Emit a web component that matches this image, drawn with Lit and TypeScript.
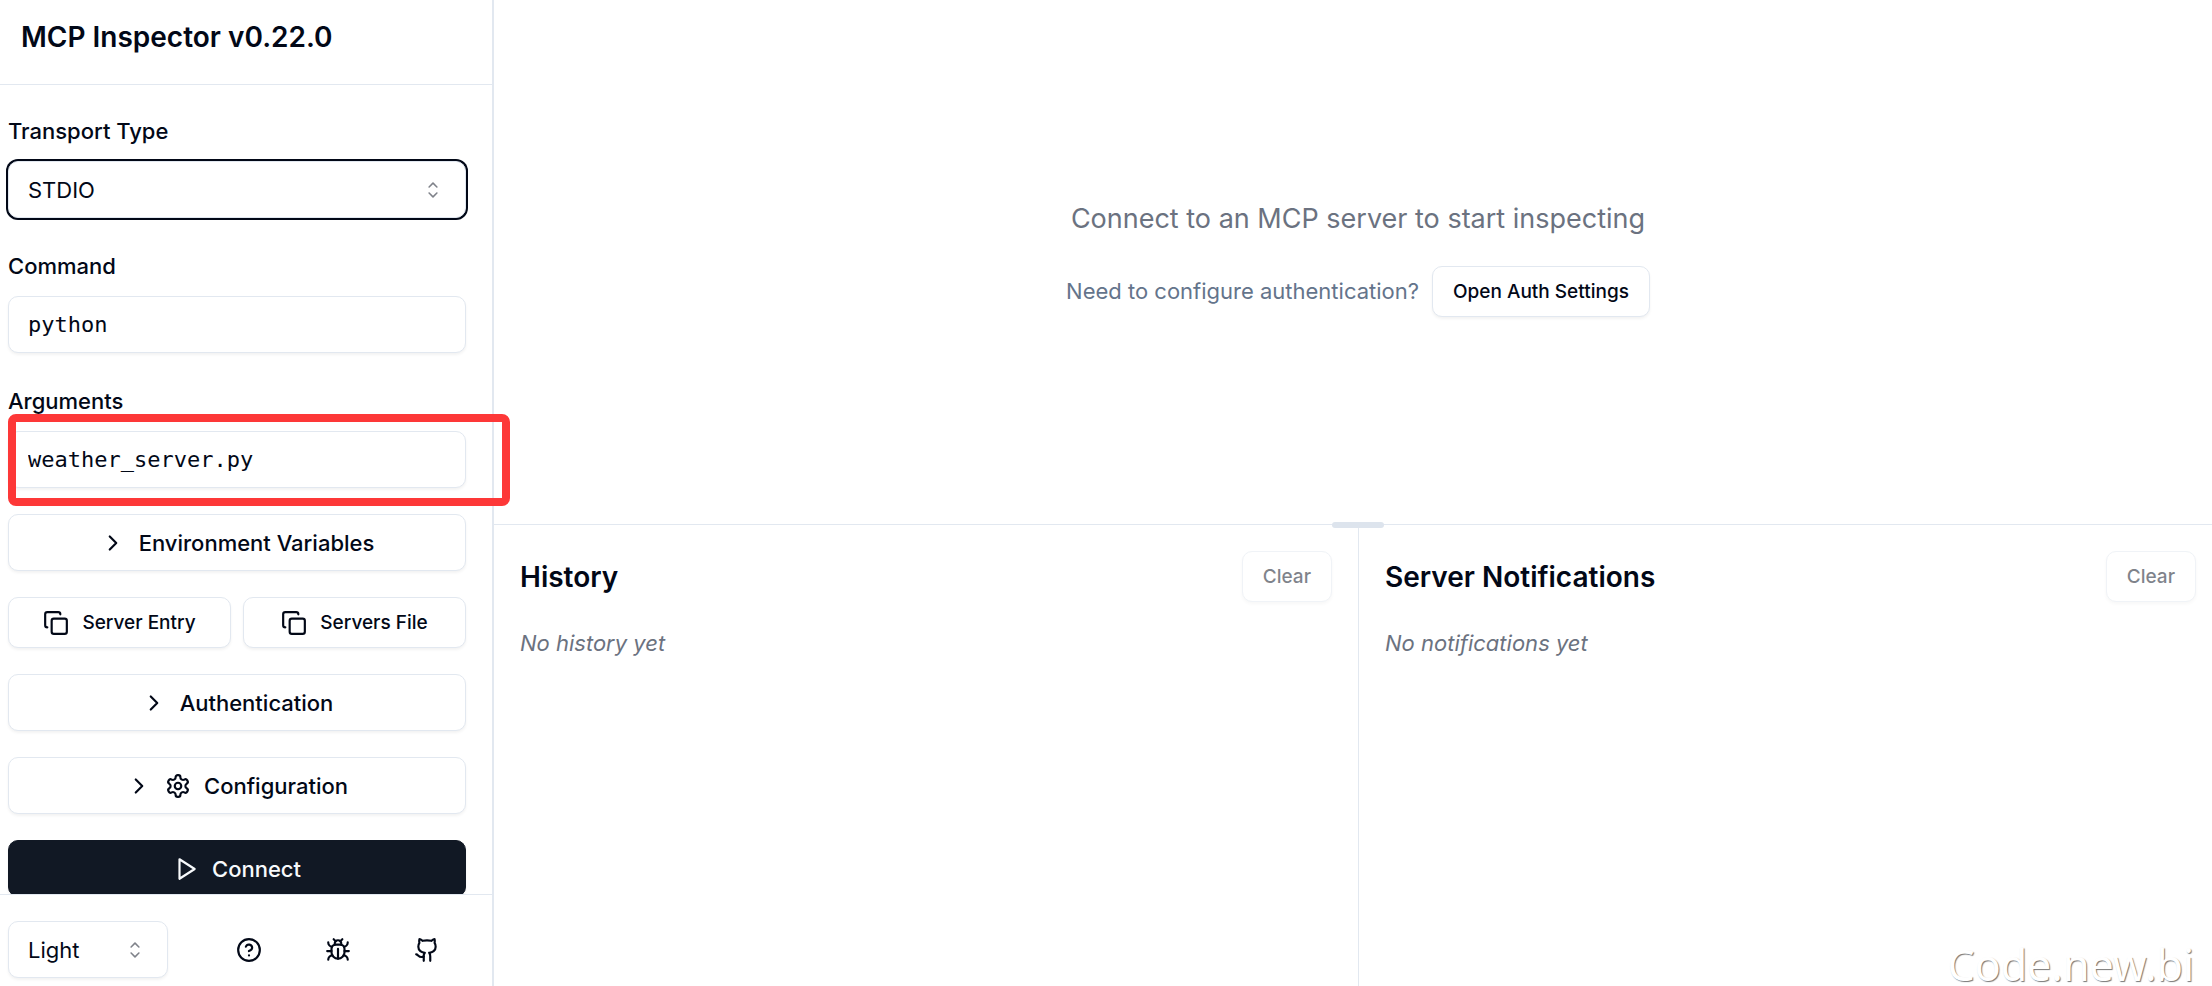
import { LitElement, html, css, svg, type TemplateResult } from "lit";
import { customElement, state } from "lit/decorators.js";

const icon = (body: TemplateResult) => html`
  <svg class="icon" viewBox="0 0 24 24" fill="none" stroke="currentColor" stroke-width="2"
    stroke-linecap="round" stroke-linejoin="round" aria-hidden="true">${body}</svg>`;

const chevronRight = icon(svg`<path d="m9 18 6-6-6-6"/>`);
const copy = icon(svg`
  <rect width="14" height="14" x="8" y="8" rx="2" ry="2"/>
  <path d="M4 16c-1.1 0-2-.9-2-2V4c0-1.1.9-2 2-2h10c1.1 0 2 .9 2 2"/>`);
const gear = icon(svg`
  <path d="M12.22 2h-.44a2 2 0 0 0-2 2v.18a2 2 0 0 1-1 1.73l-.43.25a2 2 0 0 1-2 0l-.15-.08a2 2 0 0 0-2.73.73l-.22.38a2 2 0 0 0 .73 2.73l.15.1a2 2 0 0 1 1 1.72v.51a2 2 0 0 1-1 1.74l-.15.09a2 2 0 0 0-.73 2.73l.22.38a2 2 0 0 0 2.73.73l.15-.08a2 2 0 0 1 2 0l.43.25a2 2 0 0 1 1 1.73V20a2 2 0 0 0 2 2h.44a2 2 0 0 0 2-2v-.18a2 2 0 0 1 1-1.73l.43-.25a2 2 0 0 1 2 0l.15.08a2 2 0 0 0 2.73-.73l.22-.39a2 2 0 0 0-.73-2.73l-.15-.08a2 2 0 0 1-1-1.74v-.5a2 2 0 0 1 1-1.74l.15-.09a2 2 0 0 0 .73-2.73l-.22-.38a2 2 0 0 0-2.73-.73l-.15.08a2 2 0 0 1-2 0l-.43-.25a2 2 0 0 1-1-1.73V4a2 2 0 0 0-2-2z"/>
  <circle cx="12" cy="12" r="3"/>`);
const play = icon(svg`<polygon points="6 3 20 12 6 21 6 3"/>`);
const help = icon(svg`
  <circle cx="12" cy="12" r="10"/>
  <path d="M9.09 9a3 3 0 0 1 5.83 1c0 2-3 3-3 3"/>
  <path d="M12 17h.01"/>`);
const bug = icon(svg`
  <path d="m8 2 1.88 1.88"/>
  <path d="M14.12 3.88 16 2"/>
  <path d="M9 7.13v-1a3.003 3.003 0 1 1 6 0v1"/>
  <path d="M12 20c-3.3 0-6-2.7-6-6v-3a4 4 0 0 1 4-4h4a4 4 0 0 1 4 4v3c0 3.3-2.7 6-6 6"/>
  <path d="M12 20v-9"/>
  <path d="M6.53 9C4.6 8.8 3 7.1 3 5"/>
  <path d="M6 13H2"/>
  <path d="M3 21c0-2.1 1.7-3.9 3.8-4"/>
  <path d="M20.97 5c0 2.1-1.6 3.8-3.5 4"/>
  <path d="M22 13h-4"/>
  <path d="M17.2 17c2.1.1 3.8 1.9 3.8 4"/>`);
const github = icon(svg`
  <path d="M15 22v-4a4.8 4.8 0 0 0-1-3.5c3 0 6-2 6-5.5.08-1.25-.27-2.48-1-3.5.28-1.15.28-2.35 0-3.5 0 0-1 0-3 1.5-2.64-.5-5.36-.5-8 0C6 2 5 2 5 2c-.3 1.15-.3 2.35 0 3.5A5.403 5.403 0 0 0 4 9c0 3.5 3 5.5 6 5.5-.39.49-.68 1.05-.85 1.65-.17.6-.22 1.23-.15 1.85v4"/>
  <path d="M9 18c-4.51 2-5-2-7-2"/>`);
const caretSort = html`
  <svg class="caret" viewBox="0 0 15 15" fill="currentColor" aria-hidden="true">
    <path fill-rule="evenodd" clip-rule="evenodd" d="M4.93179 5.43179C4.75605 5.60753 4.75605 5.89245 4.93179 6.06819C5.10753 6.24392 5.39245 6.24392 5.56819 6.06819L7.49999 4.13638L9.43179 6.06819C9.60753 6.24392 9.89245 6.24392 10.0682 6.06819C10.2439 5.89245 10.2439 5.60753 10.0682 5.43179L7.81819 3.18179C7.73379 3.0974 7.61933 3.04999 7.49999 3.04999C7.38064 3.04999 7.26618 3.0974 7.18179 3.18179L4.93179 5.43179ZM10.0682 9.56819C10.2439 9.39245 10.2439 9.10753 10.0682 8.93179C9.89245 8.75606 9.60753 8.75606 9.43179 8.93179L7.49999 10.8636L5.56819 8.93179C5.39245 8.75606 5.10753 8.75606 4.93179 8.93179C4.75605 9.10753 4.75605 9.39245 4.93179 9.56819L7.18179 11.8182C7.35753 11.9939 7.64245 11.9939 7.81819 11.8182L10.0682 9.56819Z"/>
  </svg>`;

const shared = css`
  :host {
    --ink: #020817;
    --muted: #64748b;
    --line: #e2e8f0;
    box-sizing: border-box;
  }
  *, *::before, *::after { box-sizing: border-box; }
  h1, h2, p { margin: 0; }
  button, input, select {
    margin: 0;
    font: inherit;
    color: inherit;
    background: #fff;
    border: 1px solid var(--line);
    border-radius: 10px;
    box-shadow: 0 2px 3px rgb(0 0 0 / 5%);
  }
  .btn {
    display: flex;
    align-items: center;
    justify-content: center;
    gap: 13px;
    height: 57px;
    padding: 0 20px;
    font-size: 22px;
    font-weight: 500;
    white-space: nowrap;
    cursor: pointer;
  }
  .btn.small { height: 51px; font-size: 19px; }
  .btn:disabled { opacity: 0.5; color: var(--ink); cursor: default; }
  .icon { width: 26px; height: 26px; flex: none; }
`;

@customElement("inspector-sidebar")
export class InspectorSidebar extends LitElement {
  static styles = [shared, css`
    :host {
      display: flex;
      flex-direction: column;
      width: 494px;
      flex: none;
      min-height: 0;
      border-right: 2px solid var(--line);
    }
    .head {
      flex: none;
      height: 85px;
      padding: 16px 21px 0;
      border-bottom: 1px solid var(--line);
    }
    h1 { font-size: 28px; line-height: 42px; font-weight: 600; }
    .body {
      flex: 1;
      min-height: 0;
      overflow-x: visible;
      overflow-y: clip;
      display: flex;
      flex-direction: column;
      gap: 26px;
      padding: 24px 26px 0 8px;
    }
    .body > * { flex: none; }
    .field { display: flex; flex-direction: column; gap: 8px; }
    label { font-size: 22px; line-height: 44px; font-weight: 500; }
    .pick { display: grid; align-items: center; }
    .pick > * { grid-area: 1 / 1; }
    select, .text {
      width: 100%;
      height: 57px;
      padding: 0 19px;
      font-size: 22px;
      outline: none;
    }
    select { appearance: none; }
    select.active {
      border-color: var(--line);
      box-shadow: 0 0 0 2px var(--ink);
    }
    .text { font-family: "DejaVu Sans Mono", monospace; }
    .caret {
      width: 26px;
      height: 26px;
      margin-right: 20px;
      justify-self: end;
      opacity: 0.5;
      pointer-events: none;
    }
    .marked { position: relative; }
    .marker {
      position: absolute;
      inset: -17px -44px -18px 0;
      border: 8px solid #fd3838;
      border-radius: 8px;
      pointer-events: none;
    }
    .pair { display: grid; grid-template-columns: 1fr 1fr; gap: 12px; }
    .primary { background: #111824; border-color: #111824; color: #f8fafc; }
    .foot {
      flex: none;
      display: flex;
      align-items: center;
      justify-content: space-between;
      padding: 26px 36px 8px 8px;
      border-top: 1px solid var(--line);
    }
    .theme { width: 160px; }
    .links { display: flex; gap: 31px; }
    .links a {
      display: grid;
      place-items: center;
      width: 58px;
      height: 57px;
      color: var(--ink);
    }
  `];

  @state() private command = "python";
  @state() private args = "weather_server.py";

  render() {
    return html`
      <header class="head"><h1>MCP Inspector v0.22.0</h1></header>
      <div class="body">
        <div class="field">
          <label for="transport">Transport Type</label>
          <div class="pick">
            <select id="transport" class="active">
              <option>STDIO</option>
              <option>SSE</option>
              <option>Streamable HTTP</option>
            </select>
            ${caretSort}
          </div>
        </div>
        <div class="field">
          <label for="command">Command</label>
          <input id="command" class="text" .value=${this.command}
            @input=${(e: Event) => (this.command = (e.target as HTMLInputElement).value)}>
        </div>
        <div class="field">
          <label for="arguments">Arguments</label>
          <div class="marked">
            <input id="arguments" class="text" .value=${this.args}
              @input=${(e: Event) => (this.args = (e.target as HTMLInputElement).value)}>
            <div class="marker"></div>
          </div>
        </div>
        <button class="btn">${chevronRight}Environment Variables</button>
        <div class="pair">
          <button class="btn small">${copy}Server Entry</button>
          <button class="btn small">${copy}Servers File</button>
        </div>
        <button class="btn">${chevronRight}Authentication</button>
        <button class="btn">${chevronRight}${gear}Configuration</button>
        <button class="btn primary">${play}Connect</button>
      </div>
      <footer class="foot">
        <div class="pick theme">
          <select aria-label="Theme">
            <option>Light</option>
            <option>Dark</option>
            <option>System</option>
          </select>
          ${caretSort}
        </div>
        <nav class="links">
          <a href="#help" aria-label="Help">${help}</a>
          <a href="#bug" aria-label="Report a bug">${bug}</a>
          <a href="#github" aria-label="GitHub">${github}</a>
        </nav>
      </footer>`;
  }
}

@customElement("inspector-main")
export class InspectorMain extends LitElement {
  static styles = [shared, css`
    :host {
      display: flex;
      flex-direction: column;
      flex: 1;
      min-width: 0;
      /* the panes run a little past the right edge of the window */
      margin-right: -10px;
    }
    .welcome {
      flex: 1;
      min-height: 0;
      display: flex;
      flex-direction: column;
      align-items: center;
      justify-content: center;
      gap: 26px;
      padding-bottom: 10px;
    }
    .lead { font-size: 27px; line-height: 42px; color: #6b7280; }
    .auth { display: flex; align-items: center; gap: 13px; font-size: 22px; color: var(--muted); }
    .auth .btn { color: var(--ink); }
    .bottom {
      position: relative;
      flex: none;
      height: 462px;
      display: grid;
      grid-template-columns: 1fr 1fr;
      border-top: 1px solid var(--line);
    }
    .handle {
      position: absolute;
      top: -3px;
      left: 50%;
      width: 52px;
      height: 6px;
      margin-left: -26px;
      border-radius: 3px;
      background: #dde4ed;
    }
    .pane { padding: 26px; }
    .pane + .pane { border-left: 1px solid var(--line); }
    .bar { display: flex; align-items: center; justify-content: space-between; }
    h2 { font-size: 28px; line-height: 42px; font-weight: 600; }
    .empty {
      margin-top: 24px;
      font-size: 22px;
      line-height: 34px;
      font-style: italic;
      color: #6b7280;
    }
  `];

  private pane(title: string, note: string) {
    return html`
      <section class="pane">
        <div class="bar">
          <h2>${title}</h2>
          <button class="btn small" disabled>Clear</button>
        </div>
        <p class="empty">${note}</p>
      </section>`;
  }

  render() {
    return html`
      <section class="welcome">
        <p class="lead">Connect to an MCP server to start inspecting</p>
        <div class="auth">
          <span>Need to configure authentication?</span>
          <button class="btn small">Open Auth Settings</button>
        </div>
      </section>
      <div class="bottom">
        ${this.pane("History", "No history yet")}
        ${this.pane("Server Notifications", "No notifications yet")}
        <div class="handle"></div>
      </div>`;
  }
}

@customElement("app-root")
export class AppRoot extends LitElement {
  static styles = css`
    :host {
      position: relative;
      display: flex;
      height: 100vh;
      overflow: hidden;
      background: #fff;
      color: #020817;
      font-family: Inter, sans-serif;
    }
    inspector-sidebar { position: relative; z-index: 1; }
    .mark {
      position: absolute;
      right: 18px;
      bottom: 0;
      font: 43px/42px "Noto Sans", sans-serif;
      color: #fff;
      text-shadow: 1px 1px 1px #777;
    }
  `;

  render() {
    return html`
      <inspector-sidebar></inspector-sidebar>
      <inspector-main></inspector-main>
      <div class="mark">Code.new.bi</div>`;
  }
}
